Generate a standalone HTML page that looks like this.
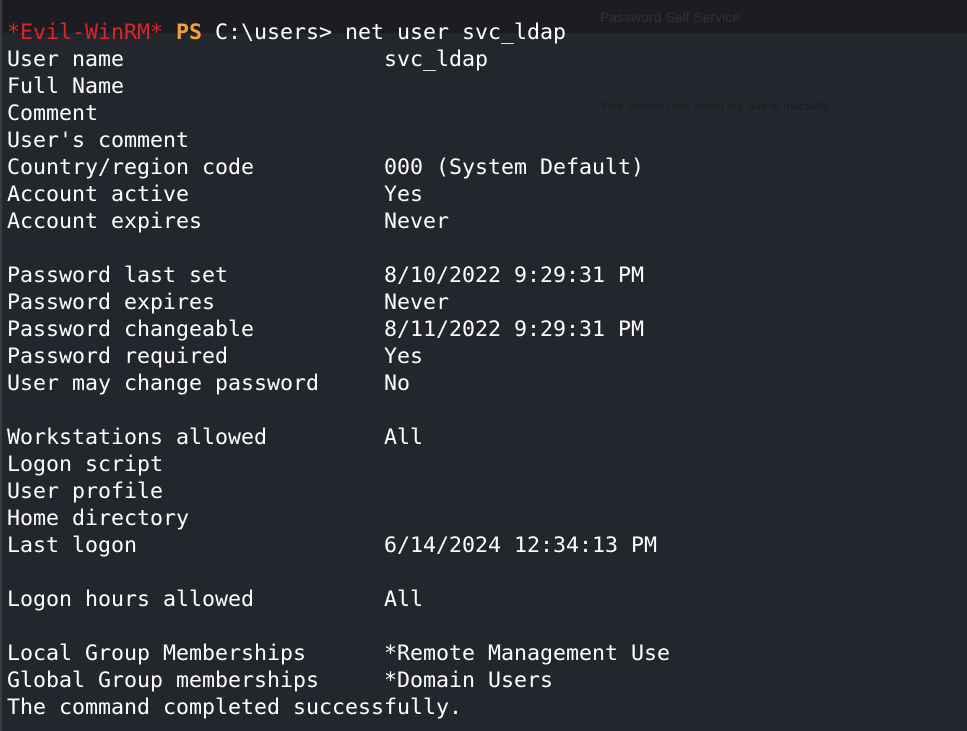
<!DOCTYPE html>
<html><head><meta charset="utf-8"><style>
html,body{margin:0;padding:0;}
body{width:967px;height:731px;background:#24262e;position:relative;overflow:hidden;}
.top{position:absolute;left:0;top:0;width:967px;height:33px;background:#1c1d23;}
.panel{position:absolute;left:595px;top:33px;width:372px;height:120px;background:#25272f;}
.ps{position:absolute;left:600px;top:9px;font:14px "Liberation Sans",sans-serif;color:#2f313a;}
.to{position:absolute;left:600px;top:99px;font:12px "Liberation Sans",sans-serif;color:#1b1c22;}
.lb{position:absolute;left:0;top:0;width:2px;height:731px;background:#3a3c44;}
pre{position:absolute;left:7px;top:19px;margin:0;font-family:"DejaVu Sans Mono","Liberation Mono",monospace;font-size:21.6px;line-height:27px;color:#ffffff;}
.r{color:#d9262a;}.o{color:#f4a03c;font-weight:bold;}
</style></head><body>
<div class="top"></div><div class="panel"></div>
<div class="ps">Password Self Service</div>
<div class="to">Your session has timed out due to inactivity.</div>
<div class="lb"></div>
<pre><span class="r">*Evil-WinRM*</span> <span class="o">PS</span> C:\users&gt; net user svc_ldap
User name                    svc_ldap
Full Name
Comment
User's comment
Country/region code          000 (System Default)
Account active               Yes
Account expires              Never

Password last set            8/10/2022 9:29:31 PM
Password expires             Never
Password changeable          8/11/2022 9:29:31 PM
Password required            Yes
User may change password     No

Workstations allowed         All
Logon script
User profile
Home directory
Last logon                   6/14/2024 12:34:13 PM

Logon hours allowed          All

Local Group Memberships      *Remote Management Use
Global Group memberships     *Domain Users
The command completed successfully.</pre>
</body></html>
